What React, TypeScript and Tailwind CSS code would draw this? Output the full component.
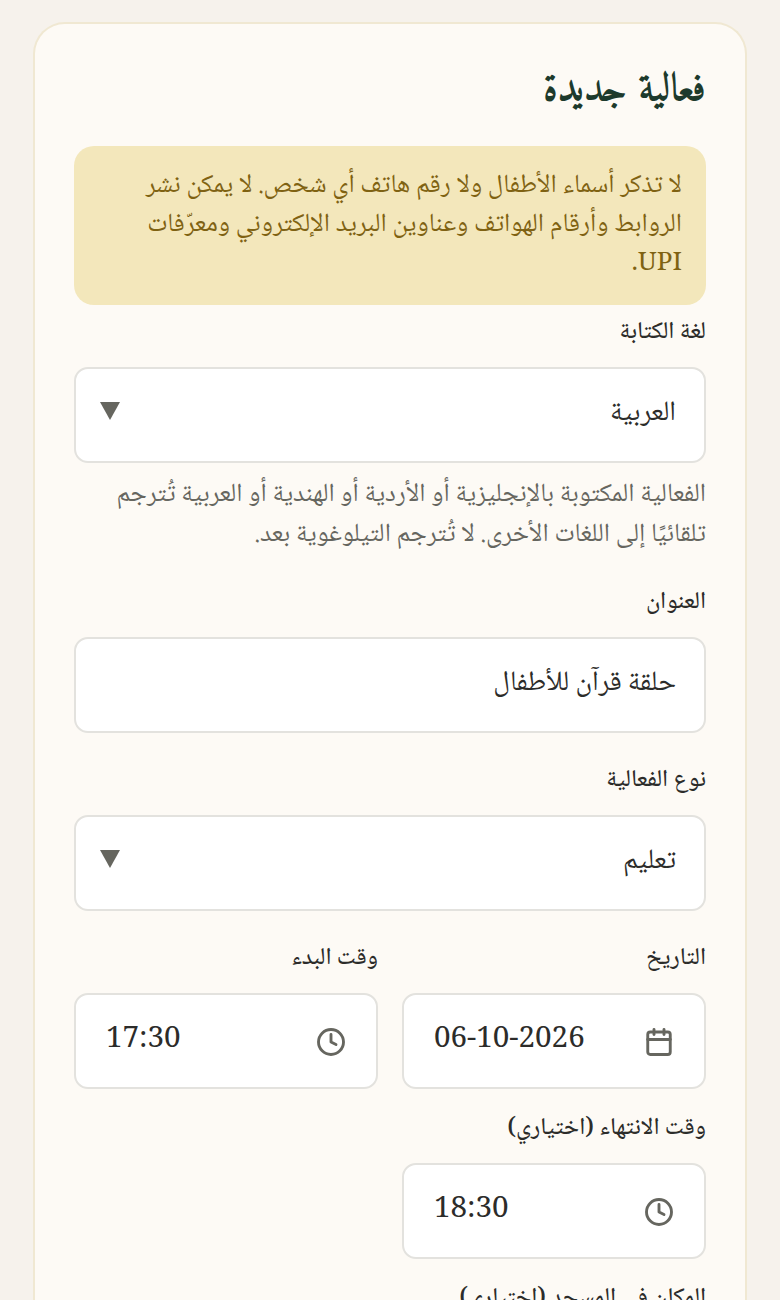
function Label({ children }: { children: React.ReactNode }) {
  return (
    <label className="mb-[20px] block pt-[2px] text-[24px] font-medium leading-[28px] text-[#2c2c2a]">
      {children}
    </label>
  );
}

function ClockIcon() {
  return (
    <svg width="30" height="30" viewBox="0 0 24 24" fill="none" stroke="#66665f" strokeWidth="2.3" strokeLinecap="round" strokeLinejoin="round">
      <circle cx="12" cy="12" r="10" />
      <path d="M12 6v6l4 2" />
    </svg>
  );
}

function CalendarIcon() {
  return (
    <svg width="30" height="30" viewBox="0 0 24 24" fill="none" stroke="#66665f" strokeWidth="2.3" strokeLinecap="round" strokeLinejoin="round">
      <path d="M8 2v4" />
      <path d="M16 2v4" />
      <rect width="18" height="18" x="3" y="4" rx="2" />
      <path d="M3 10h18" />
    </svg>
  );
}

function SelectBox({ value }: { value: string }) {
  return (
    <div className="flex h-[96px] items-center justify-between rounded-[14px] border-2 border-[#e3e2de] bg-white pl-[24px] pr-[28px]">
      <span className="pb-[2px] text-[28px] leading-[42px] text-[#2c2c2a]">{value}</span>
      <span className="mb-[8px] text-[0px]">
        <svg width="20" height="18" viewBox="0 0 20 18">
          <path d="M0 0h20L10 18z" fill="#66665f" />
        </svg>
      </span>
    </div>
  );
}

function PickerBox({ value, icon }: { value: string; icon: React.ReactNode }) {
  return (
    <div dir="ltr" className="flex h-[96px] items-start justify-between rounded-[14px] border-2 border-[#e3e2de] bg-white px-[30px]">
      <span className="pt-[24px] text-[29.6px] leading-[44px] text-[#2c2c2a]">{value}</span>
      <span className="pt-[32px]">{icon}</span>
    </div>
  );
}

export default function App() {
  return (
    <div dir="rtl" lang="ar" className="h-[1300px] overflow-hidden bg-[#f6f2ec] px-[33px] pt-[22px] font-['Noto_Naskh_Arabic',serif]">
      <div className="rounded-t-[32px] border-2 border-b-0 border-[#f0e8d2] bg-[#fdfaf5] px-[39px] pb-[40px] pt-[40px]">
        <h1 className="mb-[30px] font-['Amiri',serif] text-[40px] font-bold leading-[52px] text-[#1d3a2c]">فعالية جديدة</h1>

        <div className="rounded-[20px] bg-[#f3e7bb] px-[24px] py-[21px] text-[26px] leading-[39px] text-[#7f6212]">
          لا تذكر أسماء الأطفال ولا رقم هاتف أي شخص. لا يمكن نشر الروابط وأرقام الهواتف وعناوين البريد الإلكتروني ومعرّفات UPI.
        </div>

        <div className="mt-[12px]">
          <Label>لغة الكتابة</Label>
          <SelectBox value="العربية" />
          <p className="mt-[12px] text-[26px] leading-[40px] text-[#66665f]">
            الفعالية المكتوبة بالإنجليزية أو الأردية أو الهندية أو العربية تُترجم تلقائيًا إلى اللغات الأخرى. لا تُترجم التيلوغوية بعد.
          </p>
        </div>

        <div className="mt-[32px]">
          <Label>العنوان</Label>
          <div className="flex h-[96px] items-center rounded-[14px] border-2 border-[#e3e2de] bg-white px-[28px]">
            <span className="pb-[2px] text-[28px] leading-[42px] text-[#2c2c2a]">حلقة قرآن للأطفال</span>
          </div>
        </div>

        <div className="mt-[32px]">
          <Label>نوع الفعالية</Label>
          <SelectBox value="تعليم" />
        </div>

        <div className="mt-[32px] grid grid-cols-2 gap-[24px]">
          <div>
            <Label>التاريخ</Label>
            <PickerBox value="06-10-2026" icon={<CalendarIcon />} />
          </div>
          <div>
            <Label>وقت البدء</Label>
            <PickerBox value="17:30" icon={<ClockIcon />} />
          </div>
        </div>

        <div className="mt-[24px] grid grid-cols-2 gap-[24px]">
          <div>
            <Label>وقت الانتهاء (اختياري)</Label>
            <PickerBox value="18:30" icon={<ClockIcon />} />
          </div>
        </div>

        <div className="mt-[24px]">
          <Label>المكان في المسجد (اختياري)</Label>
        </div>
      </div>
    </div>
  );
}
